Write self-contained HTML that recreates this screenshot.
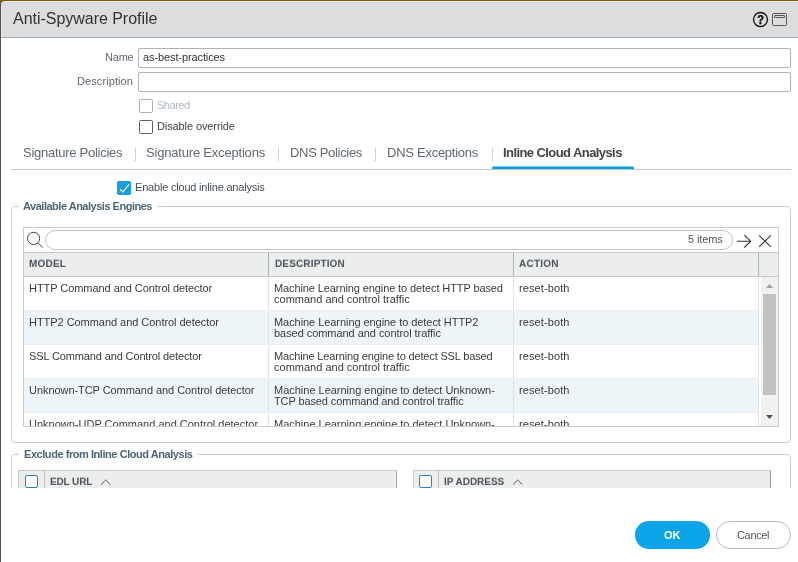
<!DOCTYPE html>
<html><head><meta charset="utf-8"><title>Anti-Spyware Profile</title>
<style>
*{box-sizing:border-box;margin:0;padding:0}
html,body{width:798px;height:562px;overflow:hidden;background:#fff;font-family:"Liberation Sans",sans-serif;color:#333}
.a,.t{position:absolute}
.t{white-space:nowrap;will-change:transform}
svg{will-change:transform}
.clip{position:absolute;left:0;top:0;width:798px;overflow:hidden}
#topline{left:0;top:0;width:798px;height:1px;background:#7a5c00}
#leftline{left:0;top:3px;width:1px;height:559px;background:#555}
#corner{left:0;top:0;width:5px;height:5px;background:#7a5c00}
#hdr{left:1px;top:1px;width:797px;height:36px;background:#dcdddf;border-top-left-radius:4px;border-top:1px solid #e5e7eb;border-left:1px solid #e5e7eb}
#hdrline{left:1px;top:37px;width:797px;height:1px;background:#a3aab1}
.inp{left:138px;width:653px;height:20px;border:1px solid #adb3b9;border-radius:2px;background:#fff}
.cb{width:14px;height:14px;border:1px solid #59616a;border-radius:1.5px;background:#fff}
.sep{width:1px;height:13px;top:148px;background:#cfd2d5}
.fs{border:1px solid #c9cdd1;border-radius:4px}
.gap{background:#fff;height:3px}
.row{left:24px;width:735px;height:34px;border-top:1px solid #ededed;background-clip:padding-box}
.alt{background:#eef5f8}
.vl{width:1px;background:#dfe1e4}
.hl{width:1px;background:#a9aeb4;top:253px;height:23px}
</style></head><body>
<div class="a" id="corner"></div>
<div class="a" id="topline"></div>
<div class="a" id="hdr"></div>
<div class="a" id="leftline"></div>
<div class="a" id="hdrline"></div>
<!-- header icons -->
<svg class="a" style="left:750px;top:10px" width="40" height="20" viewBox="0 0 40 20">
 <circle cx="10.5" cy="9.5" r="7" fill="none" stroke="#111" stroke-width="1.3"/>
 <text transform="translate(10.5 14) scale(0.88 1)" x="0" y="0" font-family="Liberation Sans, sans-serif" font-size="12.5" font-weight="bold" text-anchor="middle" fill="#111" stroke="#111" stroke-width="0.45">?</text>
 <rect x="22.5" y="3.5" width="14" height="12" rx="1" fill="none" stroke="#555" stroke-width="1"/>
 <rect x="24.5" y="5.5" width="10" height="2" rx="0.3" fill="none" stroke="#555" stroke-width="1"/>
</svg>
<!-- form -->
<div class="a inp" style="top:48px"></div>
<div class="a inp" style="top:72px"></div>
<div class="a cb" style="left:139px;top:99px;border-color:#a9b0b8"></div>
<div class="a cb" style="left:139px;top:120px"></div>
<!-- tabs -->
<div class="a" style="left:11px;top:169px;width:780px;height:1px;background:#c4c4c4"></div>
<div class="a sep" style="left:135px"></div>
<div class="a sep" style="left:278px"></div>
<div class="a sep" style="left:375px"></div>
<div class="a sep" style="left:492px"></div>
<div class="a" style="left:492px;top:166px;width:142px;height:3px;background:linear-gradient(#7cc9ef 0,#7cc9ef 1px,#0e9ce2 1px);border-radius:2px 2px 0 0"></div>
<!-- enable checkbox -->
<svg class="a" style="left:117px;top:181px" width="14" height="14" viewBox="0 0 14 14">
 <rect x="0" y="0" width="14" height="14" rx="1.8" fill="#189ee3"/>
 <path d="M2.9 8.3 L5.9 11 L12 3.3" fill="none" stroke="#fff" stroke-width="1.15"/>
</svg>
<!-- fieldset 1 -->
<div class="a fs" style="left:11px;top:206px;width:780px;height:237px"></div>
<div class="a gap" style="left:19px;top:205px;width:138px"></div>
<!-- grid -->
<div class="a" style="left:23px;top:227px;width:756px;height:200px;border:1px solid #c8cbce;background:#fff"></div>
<svg class="a" style="left:24px;top:228px" width="24" height="24" viewBox="0 0 24 24">
 <circle cx="9.6" cy="10.4" r="6.1" fill="none" stroke="#444" stroke-width="1"/>
 <path d="M13.9 14.7 L18.8 19.6" stroke="#444" stroke-width="1" fill="none"/>
</svg>
<div class="a" style="left:45px;top:230px;width:688px;height:20px;border:1px solid #bfc2c5;border-radius:10px;background:#fff"></div>
<svg class="a" style="left:734px;top:230px" width="42" height="22" viewBox="0 0 42 22">
 <path d="M3 11.2 H16.6 M10.3 5.1 L16.7 11.2 L10.3 17.5" fill="none" stroke="#333" stroke-width="1.1"/>
 <path d="M25.2 5.4 L36.8 16.8 M36.8 5.4 L25.2 16.8" fill="none" stroke="#333" stroke-width="1.1"/>
</svg>
<div class="a" style="left:24px;top:252px;width:754px;height:24px;background:#eceeee;border-top:1px solid #c8cbce"></div>
<div class="a hl" style="left:268px"></div>
<div class="a hl" style="left:513px"></div>
<div class="a hl" style="left:758px"></div>
<div class="clip" style="height:426px">
 <div class="a row" style="top:276px"></div>
 <div class="a vl" style="left:268px;top:278px;height:32px"></div>
 <div class="a vl" style="left:513px;top:278px;height:32px"></div>
 <div class="a vl" style="left:758px;top:278px;height:32px"></div>
 <div class="a row alt" style="top:310px"></div>
 <div class="a vl" style="left:268px;top:312px;height:32px"></div>
 <div class="a vl" style="left:513px;top:312px;height:32px"></div>
 <div class="a vl" style="left:758px;top:312px;height:32px"></div>
 <div class="a row" style="top:344px"></div>
 <div class="a vl" style="left:268px;top:346px;height:32px"></div>
 <div class="a vl" style="left:513px;top:346px;height:32px"></div>
 <div class="a vl" style="left:758px;top:346px;height:32px"></div>
 <div class="a row alt" style="top:378px"></div>
 <div class="a vl" style="left:268px;top:380px;height:32px"></div>
 <div class="a vl" style="left:513px;top:380px;height:32px"></div>
 <div class="a vl" style="left:758px;top:380px;height:32px"></div>
 <div class="a row" style="top:412px"></div>
 <div class="a vl" style="left:268px;top:414px;height:32px"></div>
 <div class="a vl" style="left:513px;top:414px;height:32px"></div>
 <div class="a vl" style="left:758px;top:414px;height:32px"></div>
<div class="t" style="left:29.3px;top:283px;font-size:11px;line-height:11px;color:#3a3a3a;letter-spacing:-0.055px;">HTTP Command and Control detector</div>
<div class="t" style="left:273.8px;top:283px;font-size:11px;line-height:11px;color:#3a3a3a;letter-spacing:-0.103px;">Machine Learning engine to detect HTTP based</div>
<div class="t" style="left:273.8px;top:294px;font-size:11px;line-height:11px;color:#3a3a3a;letter-spacing:0.008px;">command and control traffic</div>
<div class="t" style="left:519.4px;top:283px;font-size:11px;line-height:11px;color:#3a3a3a;letter-spacing:0.100px;">reset-both</div>
<div class="t" style="left:29.3px;top:317px;font-size:11px;line-height:11px;color:#3a3a3a;letter-spacing:-0.043px;">HTTP2 Command and Control detector</div>
<div class="t" style="left:273.8px;top:317px;font-size:11px;line-height:11px;color:#3a3a3a;letter-spacing:-0.059px;">Machine Learning engine to detect HTTP2</div>
<div class="t" style="left:273.8px;top:328px;font-size:11px;line-height:11px;color:#3a3a3a;letter-spacing:-0.050px;">based command and control traffic</div>
<div class="t" style="left:519.4px;top:317px;font-size:11px;line-height:11px;color:#3a3a3a;letter-spacing:0.100px;">reset-both</div>
<div class="t" style="left:29.3px;top:351px;font-size:11px;line-height:11px;color:#3a3a3a;letter-spacing:-0.129px;">SSL Command and Control detector</div>
<div class="t" style="left:273.8px;top:351px;font-size:11px;line-height:11px;color:#3a3a3a;letter-spacing:-0.159px;">Machine Learning engine to detect SSL based</div>
<div class="t" style="left:273.8px;top:362px;font-size:11px;line-height:11px;color:#3a3a3a;letter-spacing:0.008px;">command and control traffic</div>
<div class="t" style="left:519.4px;top:351px;font-size:11px;line-height:11px;color:#3a3a3a;letter-spacing:0.100px;">reset-both</div>
<div class="t" style="left:29.3px;top:385px;font-size:11px;line-height:11px;color:#3a3a3a;letter-spacing:-0.060px;">Unknown-TCP Command and Control detector</div>
<div class="t" style="left:273.8px;top:385px;font-size:11px;line-height:11px;color:#3a3a3a;letter-spacing:-0.013px;">Machine Learning engine to detect Unknown-</div>
<div class="t" style="left:273.8px;top:396px;font-size:11px;line-height:11px;color:#3a3a3a;letter-spacing:-0.105px;">TCP based command and control traffic</div>
<div class="t" style="left:519.4px;top:385px;font-size:11px;line-height:11px;color:#3a3a3a;letter-spacing:0.100px;">reset-both</div>
<div class="t" style="left:29.3px;top:419px;font-size:11px;line-height:11px;color:#3a3a3a;letter-spacing:0.000px;">Unknown-UDP Command and Control detector</div>
<div class="t" style="left:273.8px;top:419px;font-size:11px;line-height:11px;color:#3a3a3a;letter-spacing:-0.013px;">Machine Learning engine to detect Unknown-</div>
<div class="t" style="left:273.8px;top:430px;font-size:11px;line-height:11px;color:#3a3a3a;letter-spacing:-0.058px;">UDP based command and control traffic</div>
<div class="t" style="left:519.4px;top:419px;font-size:11px;line-height:11px;color:#3a3a3a;letter-spacing:0.100px;">reset-both</div>
</div>
<div class="a" style="left:24px;top:276px;width:754px;height:1px;background:#c8cbce"></div>
<!-- scrollbar -->
<div class="a" style="left:761px;top:277px;width:17px;height:149px;background:#f1f1f1"></div>
<div class="a" style="left:763px;top:294px;width:13px;height:101px;background:#c1c1c1"></div>
<svg class="a" style="left:761px;top:277px" width="17" height="149" viewBox="0 0 17 149">
 <path d="M5 11 L8.5 7 L12 11 Z" fill="#a3a3a3"/>
 <path d="M5 138 L8.5 142 L12 138 Z" fill="#505050"/>
</svg>
<!-- fieldset 2 -->
<div class="clip" style="height:488px">
 <div class="a fs" style="left:11px;top:454px;width:780px;height:100px"></div>
 <div class="a gap" style="left:19px;top:453px;width:178px"></div>
 <div class="a" style="left:18px;top:470px;width:379px;height:40px;background:#eceeee;border:1px solid #c8cbce;border-right-color:#aaa"></div>
 <div class="a" style="left:413px;top:470px;width:358px;height:40px;background:#eceeee;border:1px solid #c8cbce;border-right-color:#999"></div>
 <div class="a" style="left:44px;top:471px;width:1px;height:30px;background:#c0c0c0"></div>
 <div class="a" style="left:438px;top:471px;width:1px;height:30px;background:#c0c0c0"></div>
 <div class="a" style="left:25px;top:475px;width:13px;height:13px;border:1.4px solid #2187be;border-radius:2px;background:#fff"></div>
 <div class="a" style="left:419px;top:475px;width:13px;height:13px;border:1.4px solid #2187be;border-radius:2px;background:#fff"></div>
 <svg class="a" style="left:100px;top:478px" width="12" height="8" viewBox="0 0 12 8"><path d="M1 6.6 L5.7 2 L10.4 6.6" fill="none" stroke="#555" stroke-width="1"/></svg>
 <svg class="a" style="left:512px;top:478px" width="12" height="8" viewBox="0 0 12 8"><path d="M1 6.6 L5.7 2 L10.4 6.6" fill="none" stroke="#555" stroke-width="1"/></svg>
<div class="t" style="left:50.4px;top:477px;font-size:10px;line-height:10px;color:#4b5259;letter-spacing:-0.137px;font-weight:bold;transform:scale(1,0.92);transform-origin:0 8px;">EDL URL</div>
<div class="t" style="left:444.3px;top:477px;font-size:10px;line-height:10px;color:#4b5259;letter-spacing:-0.038px;font-weight:bold;transform:scale(1,0.92);transform-origin:0 8px;">IP ADDRESS</div>
</div>
<!-- buttons -->
<div class="a" style="left:635px;top:521px;width:75px;height:28px;border-radius:14px;background:#0ba4e8"></div>
<div class="a" style="left:716px;top:521px;width:75px;height:28px;border-radius:14px;background:#fff;border:1px solid #b7bbbf"></div>
<div class="t" style="left:13.0px;top:11px;font-size:16px;line-height:16px;color:#333;letter-spacing:-0.028px;">Anti-Spyware Profile</div>
<div class="t" style="left:104.5px;top:52px;font-size:11px;line-height:11px;color:#5f6770;letter-spacing:-0.211px;">Name</div>
<div class="t" style="left:77.0px;top:76px;font-size:11px;line-height:11px;color:#5f6770;letter-spacing:0.088px;">Description</div>
<div class="t" style="left:143.0px;top:52px;font-size:11px;line-height:11px;color:#333;letter-spacing:-0.104px;">as-best-practices</div>
<div class="t" style="left:157.2px;top:100px;font-size:11px;line-height:11px;color:#b3bac1;letter-spacing:-0.481px;">Shared</div>
<div class="t" style="left:157.2px;top:121px;font-size:11px;line-height:11px;color:#444;letter-spacing:-0.105px;">Disable override</div>
<div class="t" style="left:22.6px;top:146px;font-size:13px;line-height:13px;color:#606870;letter-spacing:-0.270px;">Signature Policies</div>
<div class="t" style="left:146.0px;top:146px;font-size:13px;line-height:13px;color:#606870;letter-spacing:-0.193px;">Signature Exceptions</div>
<div class="t" style="left:290.0px;top:146px;font-size:13px;line-height:13px;color:#606870;letter-spacing:-0.322px;">DNS Policies</div>
<div class="t" style="left:387.0px;top:146px;font-size:13px;line-height:13px;color:#606870;letter-spacing:-0.261px;">DNS Exceptions</div>
<div class="t" style="left:503.4px;top:146px;font-size:13px;line-height:13px;color:#444;letter-spacing:-0.580px;font-weight:bold;">Inline Cloud Analysis</div>
<div class="t" style="left:135.0px;top:182px;font-size:11px;line-height:11px;color:#474e55;letter-spacing:-0.198px;">Enable cloud inline analysis</div>
<div class="t" style="left:23.0px;top:201px;font-size:11px;line-height:11px;color:#4d6478;letter-spacing:-0.486px;font-weight:bold;">Available Analysis Engines</div>
<div class="t" style="left:688.3px;top:234px;font-size:11px;line-height:11px;color:#555;letter-spacing:-0.110px;">5 items</div>
<div class="t" style="left:29.3px;top:259px;font-size:10px;line-height:10px;color:#4b5259;letter-spacing:0.198px;font-weight:bold;transform:scale(1,0.92);transform-origin:0 8px;">MODEL</div>
<div class="t" style="left:274.6px;top:259px;font-size:10px;line-height:10px;color:#4b5259;letter-spacing:0.141px;font-weight:bold;transform:scale(1,0.92);transform-origin:0 8px;">DESCRIPTION</div>
<div class="t" style="left:519.4px;top:259px;font-size:10px;line-height:10px;color:#4b5259;letter-spacing:0.243px;font-weight:bold;transform:scale(1,0.92);transform-origin:0 8px;">ACTION</div>
<div class="t" style="left:23.5px;top:449px;font-size:11px;line-height:11px;color:#4d6478;letter-spacing:-0.443px;font-weight:bold;">Exclude from Inline Cloud Analysis</div>
<div class="t" style="left:664.2px;top:530px;font-size:11px;line-height:11px;color:#fff;letter-spacing:0.000px;font-weight:bold;">OK</div>
<div class="t" style="left:737.0px;top:530px;font-size:11px;line-height:11px;color:#555;letter-spacing:-0.342px;">Cancel</div>
</body></html>
